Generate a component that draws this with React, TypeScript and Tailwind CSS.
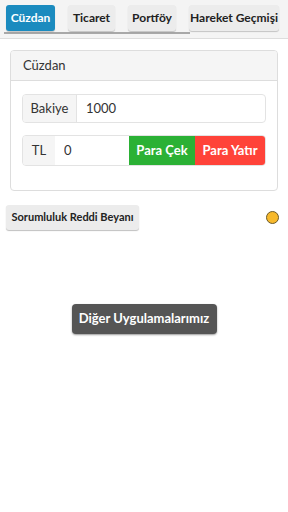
import { useState } from 'react';

const tabs = [
  { label: 'Cüzdan', w: 'w-[49px]' },
  { label: 'Ticaret', w: 'w-[47px]' },
  { label: 'Portföy', w: 'w-[48px]' },
  { label: 'Hareket Geçmişi', w: 'w-[90px]' },
];

const App = () => {
  const [active, setActive] = useState('Cüzdan');
  const [amount, setAmount] = useState('0');

  return (
    <div className="w-[288px] h-[512px] bg-white text-[#333] font-['Lato',sans-serif] overflow-hidden">
      {/* Tab bar */}
      <div className="relative h-[39px] bg-[#f4f4f4] border-b border-[#dddddd] flex items-start gap-[13px] pt-[5px] pl-[6px]">
        <div className="absolute left-[4px] top-[32px] w-[186px] h-[2px] bg-[#a8a8a8]" />
        {tabs.map((tab) => (
          <button
            key={tab.label}
            onClick={() => setActive(tab.label)}
            className={`relative shrink-0 whitespace-nowrap h-[26px] rounded-[3px] text-[12px] font-bold shadow-[0_1px_1px_rgba(0,0,0,0.2)] ${tab.w} ${
              active === tab.label ? 'bg-[#1b8bbf] text-white' : 'bg-[#ececec] text-[#222]'
            }`}
          >
            {tab.label}
          </button>
        ))}
      </div>

      {/* Wallet panel */}
      <div className="mx-[10px] mt-[11px] border border-[#dddddd] rounded-[4px] overflow-hidden">
        <div className="h-[30px] bg-[#f5f5f5] border-b border-[#dddddd] flex items-center px-[12px] text-[13px]">
          Cüzdan
        </div>
        <div className="px-[11px] pt-[13px] pb-[24px] flex flex-col gap-[12px]">
          <div className="flex h-[29px] border border-[#e3e3e3] rounded-[4px] overflow-hidden text-[13px]">
            <div className="w-[54px] bg-[#f5f5f5] border-r border-[#e3e3e3] flex items-center justify-center">Bakiye</div>
            <div className="flex-1 flex items-center px-[9px]">1000</div>
          </div>
          <div className="flex h-[31px] border border-[#e3e3e3] rounded-[4px] overflow-hidden text-[13px]">
            <div className="w-[32px] bg-[#f5f5f5] flex items-center justify-center">TL</div>
            <input
              value={amount}
              onChange={(e) => setAmount(e.target.value)}
              className="w-[74px] px-[9px] outline-none bg-white"
            />
            <button className="w-[66px] bg-[#2bb135] text-white font-bold text-[13px] whitespace-nowrap">Para Çek</button>
            <button className="flex-1 bg-[#ff4339] text-white font-bold text-[13px] whitespace-nowrap">Para Yatır</button>
          </div>
        </div>
      </div>

      {/* Disclaimer row */}
      <div className="flex items-center justify-between px-[6px] mt-[14px]">
        <button className="w-[133px] h-[25px] bg-[#ececec] rounded-[3px] text-[11px] font-bold text-[#222] whitespace-nowrap shadow-[0_1px_1px_rgba(0,0,0,0.25)]">
          Sorumluluk Reddi Beyanı
        </button>
        <div className="w-[13px] h-[13px] rounded-full bg-[#f7b92c] border border-[#6b5a2a] mr-[3px]" />
      </div>

      {/* Other apps */}
      <div className="flex justify-center mt-[74px]">
        <button className="w-[145px] h-[30px] bg-[#555555] rounded-[4px] text-white text-[13px] font-bold whitespace-nowrap shadow-[0_1px_2px_rgba(0,0,0,0.4)]">
          Diğer Uygulamalarımız
        </button>
      </div>
    </div>
  );
};

export default App;
